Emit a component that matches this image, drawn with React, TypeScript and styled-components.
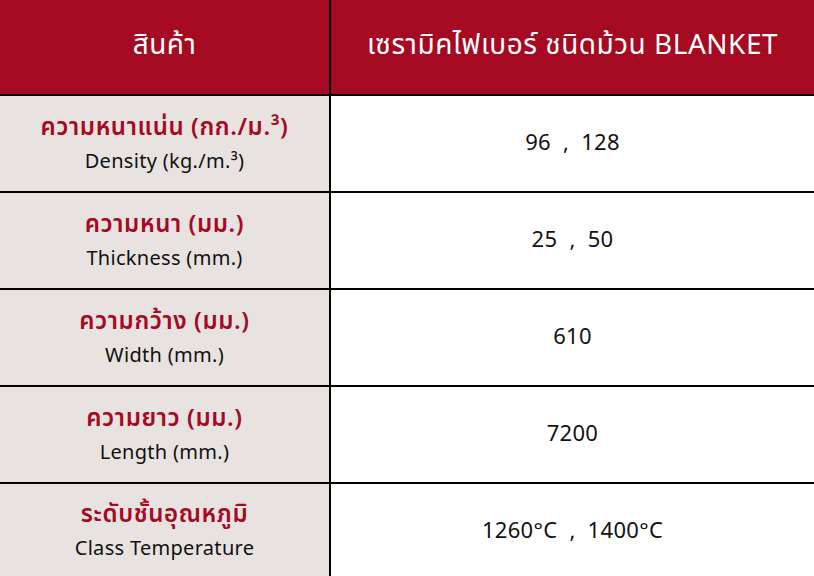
import React from "react";
import styled, { createGlobalStyle } from "styled-components";

const Global = createGlobalStyle`
  html, body { margin: 0; padding: 0; background: #ffffff; }
  body { font-family: "Noto Sans", "Noto Sans Thai", sans-serif; }
`;

const Table = styled.div`
  display: grid;
  grid-template-columns: 329px 2px 1fr;
  width: 814px;
`;

const HeadCell = styled.div`
  height: 94px;
  background: #a60922;
  color: #ffffff;
  font-size: 28px;
  letter-spacing: 0.5px;
  display: flex;
  align-items: center;
  justify-content: center;
  padding-bottom: 4px;
  box-sizing: border-box;
`;

const VLine = styled.div`
  background: #000000;
`;

const HLine = styled.div`
  grid-column: 1 / -1;
  height: 2px;
  background: #000000;
`;

const LabelCell = styled.div<{ $h: number }>`
  height: ${(p) => p.$h}px;
  background: #e8e3e0;
  display: flex;
  flex-direction: column;
  align-items: center;
  justify-content: center;
  gap: 8px;
  padding-bottom: 2px;
  box-sizing: border-box;
`;

const Thai = styled.div`
  color: #a60922;
  font-weight: 600;
  font-size: 24px;
  line-height: 28px;
  letter-spacing: 0.6px;
`;

const Eng = styled.div`
  color: #111111;
  font-size: 20px;
  line-height: 26px;
  letter-spacing: 0.3px;
`;

const ValueCell = styled.div<{ $h: number }>`
  height: ${(p) => p.$h}px;
  display: flex;
  align-items: center;
  justify-content: center;
  font-size: 22px;
  letter-spacing: 0.3px;
  color: #111111;
  white-space: pre;
  padding-bottom: 5px;
  box-sizing: border-box;
`;

const rows = [
  { th: "ความหนาแน่น (กก./ม.³)", en: "Density (kg./m.³)", v: "96  ,  128" },
  { th: "ความหนา (มม.)", en: "Thickness (mm.)", v: "25  ,  50" },
  { th: "ความกว้าง (มม.)", en: "Width (mm.)", v: "610" },
  { th: "ความยาว (มม.)", en: "Length (mm.)", v: "7200" },
  { th: "ระดับชั้นอุณหภูมิ", en: "Class Temperature", v: "1260°C  ,  1400°C" },
];

export default function App() {
  return (
    <>
      <Global />
      <Table>
        <HeadCell>สินค้า</HeadCell>
        <VLine />
        <HeadCell>เซรามิคไฟเบอร์ ชนิดม้วน BLANKET</HeadCell>
        {rows.map((r, i) => {
          const h = i === rows.length - 1 ? 94 : 95;
          return (
            <React.Fragment key={i}>
              <HLine />
              <LabelCell $h={h}>
                <Thai>{r.th}</Thai>
                <Eng>{r.en}</Eng>
              </LabelCell>
              <VLine />
              <ValueCell $h={h}>{r.v}</ValueCell>
            </React.Fragment>
          );
        })}
      </Table>
    </>
  );
}
